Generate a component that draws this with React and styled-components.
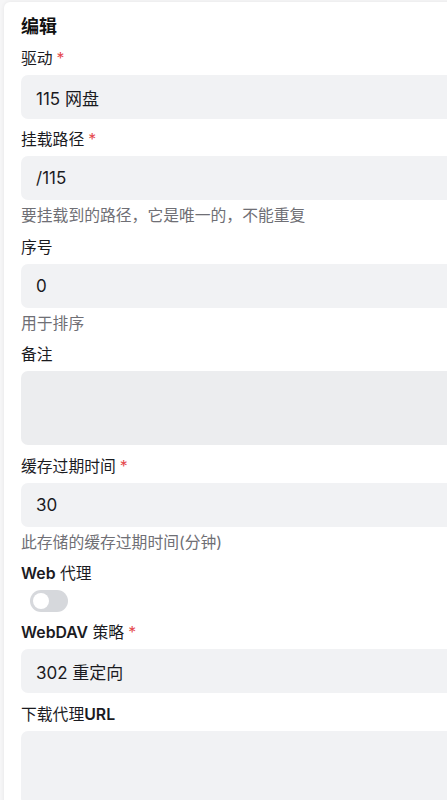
import styled, { createGlobalStyle } from "styled-components";

const GlobalStyle = createGlobalStyle`
    html, body {
        margin: 0;
        padding: 0;
        background: #f6f6f7;
        overflow: hidden;
    }
    body {
        font-family: Inter, "Noto Sans CJK SC", sans-serif;
        color: #1b1b1f;
    }
`;

export default function App() {
    const fields = [
        { label: "驱动", required: true, value: "115 网盘" },
        { label: "挂载路径", required: true, value: "/115", help: "要挂载到的路径，它是唯一的，不能重复" },
        { label: "序号", value: "0", help: "用于排序" },
        { label: "备注", textarea: true, dark: true },
        { label: "缓存过期时间", required: true, value: "30", help: "此存储的缓存过期时间(分钟)" },
        { label: <><Latin>Web</Latin> 代理</>, switch: true },
        { label: <><Latin>WebDAV</Latin> 策略</>, required: true, value: "302 重定向" },
        { label: <>下载代理<Latin>URL</Latin></>, textarea: true },
    ];

    return (
        <>
            <GlobalStyle />
            <Page>
                <Card>
                    <Title>编辑</Title>
                    {fields.map((f, i) => (
                        <Field key={i}>
                            <Label>
                                {f.label}
                                {f.required && <Star>*</Star>}
                            </Label>
                            {f.switch ? (
                                <Track>
                                    <Thumb />
                                </Track>
                            ) : f.textarea ? (
                                <TextBox $dark={f.dark} />
                            ) : (
                                <InputBox>{f.value}</InputBox>
                            )}
                            {f.help && <Help>{f.help}</Help>}
                        </Field>
                    ))}
                </Card>
            </Page>
        </>
    );
}

const Page = styled.div`
    padding: 2px 0 0 4px;
    height: 800px;
    box-sizing: border-box;
`;

const Card = styled.div`
    width: 640px;
    min-height: 820px;
    background: #ffffff;
    border-radius: 6px;
    box-shadow: 0 0 4px rgba(0, 0, 0, 0.07);
    padding: 14px 17px;
    box-sizing: border-box;
    display: flex;
    flex-direction: column;
    gap: 11.4px;
`;

const Title = styled.h2`
    margin: 0 0 -0.4px;
    font-size: 18px;
    line-height: 22px;
    font-weight: 700;
    color: #111;
`;

const Field = styled.div`
    display: flex;
    flex-direction: column;
    align-items: flex-start;
`;

const Label = styled.label`
    font-size: 15.8px;
    line-height: 20px;
    font-weight: 400;
    margin-bottom: 6px;
    color: #1b1b1f;
`;

const Latin = styled.span`
    font-weight: 600;
`;

const Star = styled.span`
    color: #e5484d;
    margin-left: 4px;
`;

const InputBox = styled.div`
    width: 100%;
    height: 44px;
    box-sizing: border-box;
    background: #f1f2f4;
    border-radius: 7px;
    padding: 0 15px;
    display: flex;
    align-items: center;
    font-size: 17px;
    color: #1b1b1f;
`;

const TextBox = styled.div`
    width: 100%;
    height: 74px;
    background: ${(p) => (p.$dark ? "#ecedef" : "#f1f2f4")};
    border-radius: 7px;
`;

const Help = styled.div`
    margin-top: 6px;
    font-size: 15.8px;
    line-height: 20px;
    color: #6f6f75;
`;

const Track = styled.div`
    margin-left: 9px;
    width: 38px;
    height: 22px;
    border-radius: 11px;
    background: #d6d8dc;
    padding: 3px;
    box-sizing: border-box;
    display: flex;
    align-items: center;
`;

const Thumb = styled.div`
    width: 16px;
    height: 16px;
    border-radius: 50%;
    background: #ffffff;
`;
